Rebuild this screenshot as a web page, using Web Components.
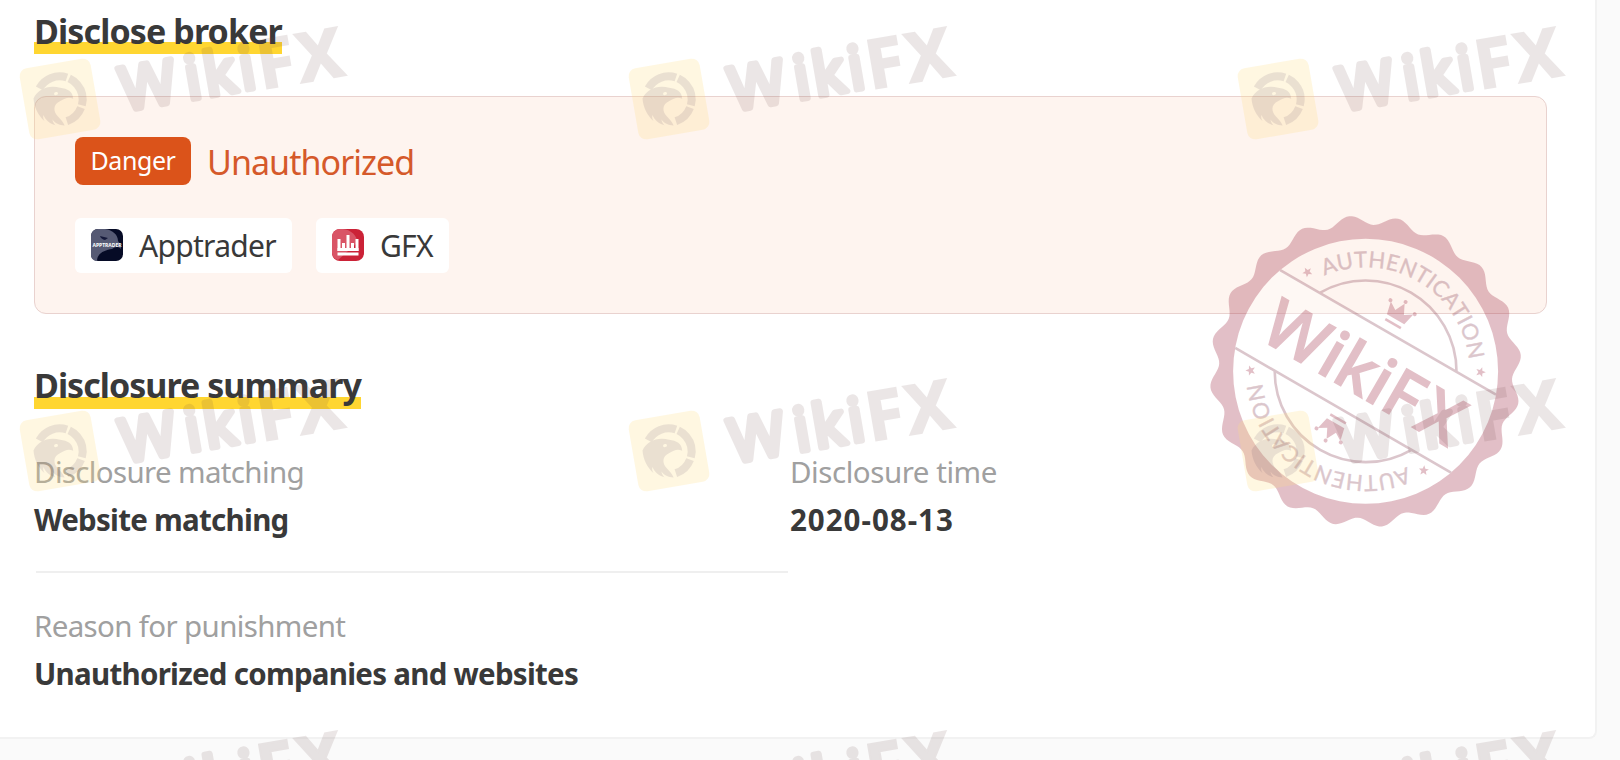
<!DOCTYPE html>
<html lang="en">
<head>
<meta charset="UTF-8">
<title>Disclosure</title>
<style>
  body {
    margin: 0;
    background: #fafafa;
    font-family: "Noto Sans", "Open Sans", sans-serif;
    color: #393939;
    overflow: hidden;
  }
</style>
</head>
<body>
<disclosure-page>
  <section-title style="letter-spacing: -0.88px; line-height: 44px">Disclose broker</section-title>
  <broker-panel level="Danger" status="Unauthorized">
    <broker-chip name="Apptrader" icon="apptrader"></broker-chip>
    <broker-chip name="GFX" icon="gfx"></broker-chip>
  </broker-panel>
  <section-title style="letter-spacing: -0.97px">Disclosure summary</section-title>
  <summary-grid>
    <summary-item label="Disclosure matching" line>Website matching</summary-item>
    <summary-item label="Disclosure time" style="--label-gap: -0.45px; --value-gap: 1px">2020-08-13</summary-item>
    <summary-item label="Reason for punishment">Unauthorized companies and websites</summary-item>
  </summary-grid>
  <auth-stamp slot="overlay"></auth-stamp>
  <water-mark slot="overlay"></water-mark>
</disclosure-page>

<script>
class DisclosurePage extends HTMLElement {
  constructor() {
    super();
    this.attachShadow({ mode: "open" }).innerHTML = `
      <style>
        :host {
          display: block;
          position: relative;
          width: 1620px;
          height: 760px;
          overflow: hidden;
        }
        .card {
          box-sizing: border-box;
          width: 1597px;
          height: 739px;
          padding: 9px 48px 0 34px;
          background: #fff;
          border: solid #f2f2f2;
          border-width: 0 2px 2px 0;
          border-bottom-right-radius: 8px;
        }
      </style>
      <div class="card"><slot></slot></div>
      <slot name="overlay"></slot>
    `;
  }
}

class SectionTitle extends HTMLElement {
  constructor() {
    super();
    this.attachShadow({ mode: "open" }).innerHTML = `
      <style>
        :host {
          display: block;
          height: 45px;
          font-size: 34px;
          font-weight: 700;
          line-height: 43px;
          white-space: nowrap;
        }
        span {
          display: block;
          width: fit-content;
          height: 45px;
          background: linear-gradient(#ffd631, #ffd631) 0 100% / 100% 12px no-repeat;
        }
      </style>
      <span><slot></slot></span>
    `;
  }
}

class BrokerPanel extends HTMLElement {
  connectedCallback() {
    this.attachShadow({ mode: "open" }).innerHTML = `
      <style>
        :host {
          display: block;
          box-sizing: border-box;
          height: 218px;
          margin: 42px 0 50px;
          padding: 40px;
          background: #fef4ef;
          border: 1px solid #e9d2cf;
          border-radius: 12px;
        }
        .status {
          display: flex;
          align-items: center;
          gap: 16px;
          height: 48px;
          color: #d5592a;
          font-size: 34px;
        }
        .badge {
          box-sizing: border-box;
          width: 116px;
          height: 48px;
          line-height: 47px;
          text-align: center;
          border-radius: 8px;
          background: #db531a;
          color: #fff;
          font-size: 25px;
          letter-spacing: -0.4px;
        }
        .text {
          padding-top: 2px;
          letter-spacing: -0.95px;
        }
        .brokers {
          display: flex;
          gap: 24px;
          margin-top: 33px;
        }
      </style>
      <div class="status">
        <span class="badge">${this.getAttribute("level")}</span>
        <span class="text">${this.getAttribute("status")}</span>
      </div>
      <div class="brokers"><slot></slot></div>
    `;
  }
}

const icons = {
  apptrader: `
    <rect width="32" height="32" rx="7" fill="#060b26"/>
    <path d="M7 0H14C22 1 27 6 27 12C29 15 30 17 30 20C27 17 24 18 21 20C14 21 6 24 6 32A6 6 0 0 1 0 25V7A7 7 0 0 1 7 0Z" fill="#565a74"/>
    <path d="M9 7L17 9L14 11Q10 10 9 7Z" fill="#15193a"/>
    <text x="1.5" y="18" font-size="5" font-weight="700" textLength="29" lengthAdjust="spacingAndGlyphs" fill="#fff">APPTRADER</text>`,
  gfx: `
    <rect width="32" height="32" rx="8" fill="#cb2237"/>
    <path d="M8 0H11C20 1 26 8 25 14L6 31A8 8 0 0 1 0 24V8A8 8 0 0 1 8 0Z" fill="#d95466"/>
    <path d="M7 10V22M11.500 14V22M16 6V22M20.500 14V22M25 10V22" stroke="#fff" stroke-width="3"/>
    <path d="M5.500 19H26.500V22H5.500ZM5.500 23.500H26.500V26.500H5.500Z" fill="#fff"/>`
};

class BrokerChip extends HTMLElement {
  connectedCallback() {
    this.attachShadow({ mode: "open" }).innerHTML = `
      <style>
        :host {
          display: flex;
          align-items: center;
          box-sizing: border-box;
          gap: 16px;
          height: 55px;
          padding: 0 16px;
          background: #fff;
          border-radius: 6px;
          font-size: 30px;
          line-height: 55px;
          letter-spacing: -0.7px;
        }
        svg {
          flex: none;
          margin-bottom: 1px;
          letter-spacing: 0;
        }
      </style>
      <svg width="32" height="32">${icons[this.getAttribute("icon")]}</svg>
      <span>${this.getAttribute("name")}</span>
    `;
  }
}

class SummaryGrid extends HTMLElement {
  constructor() {
    super();
    this.attachShadow({ mode: "open" }).innerHTML = `
      <style>
        :host {
          display: grid;
          grid-template-columns: 756px 756px;
          grid-template-rows: 154px 120px;
          margin-top: 39px;
        }
      </style>
      <slot></slot>
    `;
  }
}

class SummaryItem extends HTMLElement {
  connectedCallback() {
    this.attachShadow({ mode: "open" }).innerHTML = `
      <style>
        :host {
          display: block;
          white-space: nowrap;
          font-size: 29.5px;
          line-height: 48px;
        }
        :host([line]) {
          height: 123px;
          background: linear-gradient(#efefef, #efefef) 2px 100% / 752px 2px no-repeat;
          padding-bottom: 2px;
        }
        .label {
          color: #a0a0a0;
          letter-spacing: var(--label-gap, -0.65px);
        }
        .value {
          font-weight: 700;
          letter-spacing: var(--value-gap, -0.73px);
        }
      </style>
      <div class="label">${this.getAttribute("label")}</div>
      <div class="value"><slot></slot></div>
    `;
  }
}

class AuthStamp extends HTMLElement {
  constructor() {
    super();
    // scalloped rim, 20 lobes
    let rim = "";
    for (let a = 0; a < 360; a++) {
      const t = a * Math.PI / 180;
      const r = 151.3 + 4.7 * Math.cos(20 * (a + 6) * Math.PI / 180);
      rim += (a ? "L" : "M") + (r * Math.cos(t)).toFixed(2) + " " + (r * Math.sin(t)).toFixed(2);
    }
    const star = "M0-4.500L1.200-1.500L4.300-1.400L1.900.6L2.700 3.700L0 1.900L-2.700 3.700L-1.900.6L-4.300-1.400L-1.200-1.500Z";
    const half = `
      <path d="M-124.600-45H124.600M-79-45A91 91 0 0 1 79-45" fill="none" stroke="#8c4458" stroke-width="2.600"/>
      <path d="${star}" transform="rotate(-60.400) translate(0 -115) scale(1.150)"/>
      <path d="${star}" transform="rotate(60.400) translate(0 -115) scale(1.150)"/>
      <path d="M-10-60L-13-73L-5-68L0-78L5-68L13-73L10-60Z"/>
      <path d="M-9-55H9" stroke="#a23048" stroke-width="2.500"/>
      <circle cx="-14" cy="-74" r="2"/><circle cx="0" cy="-80" r="2"/><circle cx="14" cy="-74" r="2"/>
      <text font-size="22" textLength="194" font-family="Lato" fill="#8c4458" stroke="#8c4458" stroke-width=".4"><textPath href="#ring" startOffset="66.400" textLength="194">AUTHENTICATION</textPath></text>`;
    this.attachShadow({ mode: "open" }).innerHTML = `
      <style>
        :host {
          display: block;
          position: absolute;
          left: 1205px;
          top: 211px;
          width: 321px;
          height: 321px;
        }
      </style>
      <svg width="321" height="321" viewBox="-160.600 -160.300 321 321">
        <defs><path id="ring" d="M-104 0A104 104 0 0 1 104 0"/></defs>
        <path transform="rotate(30)" fill="#fff" opacity=".35" d="M-124.600-45H124.600A132.500 132.500 0 0 1 124.600 45H-124.600A132.500 132.500 0 0 1-124.600-45Z"/>
        <g fill="#a23048" opacity=".3">
          <path fill-rule="evenodd" d="${rim}ZM-132.500 0A132.500 132.500 0 1 0 132.500 0A132.500 132.500 0 1 0-132.500 0Z"/>
          <g transform="rotate(30)">${half}
            <text x="-110 -45 -27 10 28 68" y="25" font-size="67" font-weight="500" stroke="#a23048" stroke-width="1.500">WikiFX</text>
          </g>
          <g transform="rotate(210)">${half}</g>
        </g>
      </svg>
    `;
  }
}

class WaterMark extends HTMLElement {
  constructor() {
    super();
    const mark = `
      <rect x="-36" y="-36" width="72" height="72" rx="8" fill="#ffdf80" opacity=".24"/>
      <g opacity=".11">
        <path fill="#4a3058" fill-rule="evenodd" d="M-26-5C-20-14-8-16 2-11C9-9 14-5 13 2C9-1 5 0 0 2C-8 4-9 11-5 17C-3 20-1 23 0 27C-5 26-9 23-11 19C-11 22-10 24-9 25C-14 23-18 18-19 13C-20 15-20 17-19 19C-24 13-27 4-26-5ZM-5-6A2 1.500 0 1 0-1-6A2 1.500 0 1 0-5-6Z"/>
        <path fill="none" stroke="#4a3058" stroke-width="8" stroke-dasharray="32 2.500" d="M-18.500-14A23 23 0 1 1 3 23"/>
      </g>
      <g fill="#6a4646" opacity=".13">
        <text stroke="#6a4646">
          <tspan x="61 126.500 145.500 181.500" y="22.500" font-size="60" stroke-width="6" stroke-linejoin="round">Wiki</tspan><tspan x="200 240.500" y="25" font-size="68" font-weight="700" stroke-width="2">FX</tspan>
        </text>
      </g>`;
    let marks = "";
    for (const y of [99, 451, 803]) {
      for (const x of [60, 669, 1278]) {
        marks += `<g transform="translate(${x} ${y}) rotate(-9.800)">${mark}</g>`;
      }
    }
    this.attachShadow({ mode: "open" }).innerHTML = `
      <style>
        :host {
          display: block;
          position: absolute;
          inset: 0;
          pointer-events: none;
        }
      </style>
      <svg width="1620" height="760">${marks}</svg>
    `;
  }
}

customElements.define("disclosure-page", DisclosurePage);
customElements.define("section-title", SectionTitle);
customElements.define("broker-panel", BrokerPanel);
customElements.define("broker-chip", BrokerChip);
customElements.define("summary-grid", SummaryGrid);
customElements.define("summary-item", SummaryItem);
customElements.define("auth-stamp", AuthStamp);
customElements.define("water-mark", WaterMark);
</script>
</body>
</html>
